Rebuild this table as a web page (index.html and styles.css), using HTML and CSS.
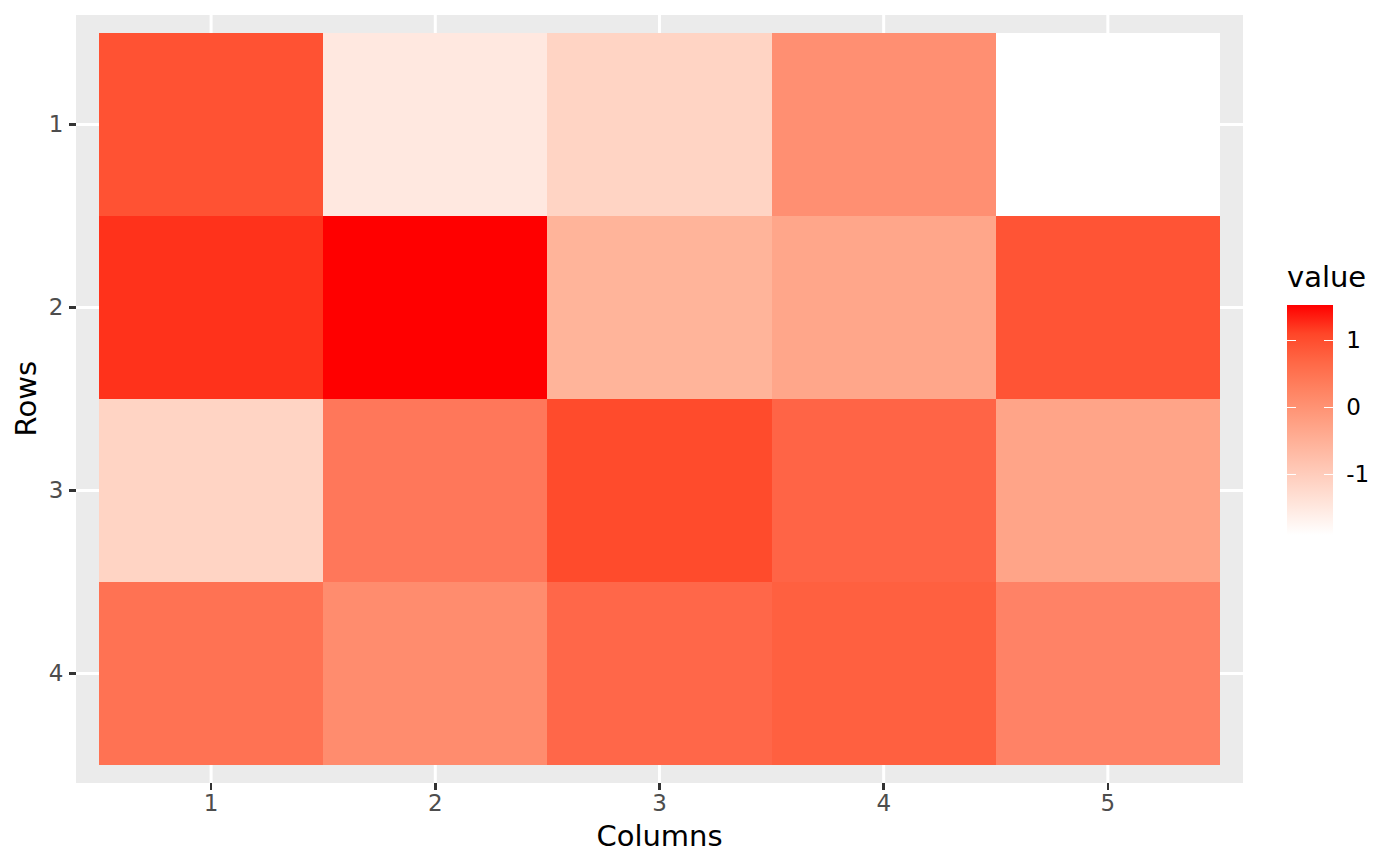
FILE: index.html
```html
<!DOCTYPE html>
<html lang="en">
<head>
<meta charset="utf-8">
<title>Heatmap</title>
<link rel="stylesheet" href="styles.css">
</head>
<body>
<div class="plot">
  <div class="left">
    <div class="ytitle">Rows</div>
    <div class="yaxis">
      <div class="yrow"><span class="ylab">1</span><span class="ytick"></span></div>
      <div class="yrow"><span class="ylab">2</span><span class="ytick"></span></div>
      <div class="yrow"><span class="ylab">3</span><span class="ytick"></span></div>
      <div class="yrow"><span class="ylab">4</span><span class="ytick"></span></div>
    </div>
  </div>

  <div class="panel">
    <div class="tiles">
      <div class="tile" style="background:#FF5233"></div>
      <div class="tile" style="background:#FFE8E0"></div>
      <div class="tile" style="background:#FFD4C4"></div>
      <div class="tile" style="background:#FF8F72"></div>
      <div class="tile" style="background:#FFFFFF"></div>

      <div class="tile" style="background:#FF321B"></div>
      <div class="tile" style="background:#FF0000"></div>
      <div class="tile" style="background:#FFB49A"></div>
      <div class="tile" style="background:#FFA68A"></div>
      <div class="tile" style="background:#FF5435"></div>

      <div class="tile" style="background:#FFD4C4"></div>
      <div class="tile" style="background:#FF775A"></div>
      <div class="tile" style="background:#FF4B2C"></div>
      <div class="tile" style="background:#FF6446"></div>
      <div class="tile" style="background:#FFA488"></div>

      <div class="tile" style="background:#FF7253"></div>
      <div class="tile" style="background:#FF8C6E"></div>
      <div class="tile" style="background:#FF6749"></div>
      <div class="tile" style="background:#FF6040"></div>
      <div class="tile" style="background:#FF8266"></div>
    </div>
  </div>

  <div class="legend">
    <div class="ltitle">value</div>
    <div class="lbody">
      <div class="bar">
        <div class="btick"></div>
        <div class="btick"></div>
        <div class="btick"></div>
      </div>
      <div class="llabels">
        <div class="llab">1</div>
        <div class="llab">0</div>
        <div class="llab">-1</div>
      </div>
    </div>
  </div>

  <div class="xaxis">
    <div class="xcell"><span class="xtick"></span><span class="xlab">1</span></div>
    <div class="xcell"><span class="xtick"></span><span class="xlab">2</span></div>
    <div class="xcell"><span class="xtick"></span><span class="xlab">3</span></div>
    <div class="xcell"><span class="xtick"></span><span class="xlab">4</span></div>
    <div class="xcell"><span class="xtick"></span><span class="xlab">5</span></div>
  </div>

  <div class="xtitle">Columns</div>
</div>
</body>
</html>
```

FILE: styles.css
```css
html, body {
  margin: 0;
  padding: 0;
  background: #ffffff;
}

body {
  width: 1400px;
  height: 866px;
  overflow: hidden;
  font-family: "DejaVu Sans", "Liberation Sans", sans-serif;
}

.plot {
  display: grid;
  grid-template-columns: 76px 1167px 1fr;
  grid-template-rows: 768px auto auto;
  padding-top: 15px;
}

/* ---------- left: y title + y axis ---------- */
.left {
  grid-column: 1;
  grid-row: 1;
  display: flex;
  align-items: center;
}

.ytitle {
  margin-left: 12px;
  writing-mode: vertical-rl;
  transform: rotate(180deg);
  font-size: 29px;
  line-height: 1;
  color: #000000;
  white-space: nowrap;
}

.yaxis {
  flex: 1;
  align-self: stretch;
  display: grid;
  grid-template-rows: repeat(4, 1fr);
  padding: 18px 0;
}

.yrow {
  display: flex;
  align-items: center;
  justify-content: flex-end;
  gap: 5.5px;
}

.ylab {
  font-size: 23px;
  line-height: 1;
  color: #4D4D4D;
}

.ytick {
  width: 7px;
  height: 2.5px;
  background: #333333;
}

/* ---------- panel ---------- */
.panel {
  grid-column: 2;
  grid-row: 1;
  background-color: #EBEBEB;
  background-image:
    linear-gradient(to right, transparent 110.85px, #ffffff 110.85px, #ffffff 113.35px, transparent 113.35px),
    linear-gradient(to bottom, transparent 90.25px, #ffffff 90.25px, #ffffff 92.75px, transparent 92.75px);
  background-size: 224.2px 100%, 100% 183px;
  background-position: 23px 0, 0 18px;
  background-repeat: repeat-x, repeat-y;
  padding: 18px 23px;
  box-sizing: border-box;
}

.tiles {
  display: grid;
  grid-template-columns: repeat(5, 1fr);
  grid-template-rows: repeat(4, 1fr);
  height: 100%;
}

.tile {
  min-width: 0;
}

/* ---------- legend ---------- */
.legend {
  grid-column: 3;
  grid-row: 1;
  align-self: center;
  padding-left: 44px;
}

.ltitle {
  font-size: 29px;
  line-height: 1;
  color: #000000;
  margin-bottom: 13px;
}

.lbody {
  display: flex;
  gap: 13.3px;
}

.bar {
  width: 46px;
  height: 230px;
  box-sizing: border-box;
  padding-top: 2.2px;
  display: grid;
  grid-auto-rows: 67px;
  align-items: center;
  background: linear-gradient(to bottom,
    #FF0000 0%,
    #FF4628 12.5%,
    #FF6846 25%,
    #FF8463 37.5%,
    #FF9E81 50%,
    #FFB7A0 62.5%,
    #FFCFBF 75%,
    #FFE7DE 87.5%,
    #FFFFFF 100%);
}

.btick {
  height: 1.2px;
  background: linear-gradient(to right,
    #ffffff 0, #ffffff 9.2px,
    transparent 9.2px, transparent 36.8px,
    #ffffff 36.8px, #ffffff 100%);
}

.llabels {
  display: grid;
  grid-auto-rows: 67px;
  align-items: center;
  padding-top: 2.2px;
  align-content: start;
}

.llab {
  font-size: 23px;
  line-height: 1;
  color: #000000;
}

/* ---------- x axis ---------- */
.xaxis {
  grid-column: 2;
  grid-row: 2;
  display: grid;
  grid-template-columns: repeat(5, 1fr);
  padding: 0 23px;
}

.xcell {
  display: flex;
  flex-direction: column;
  align-items: center;
}

.xtick {
  width: 2.5px;
  height: 7px;
  background: #333333;
}

.xlab {
  margin-top: 2.3px;
  font-size: 23px;
  line-height: 1;
  color: #4D4D4D;
}

.xtitle {
  grid-column: 2;
  grid-row: 3;
  text-align: center;
  margin-top: 6.3px;
  font-size: 29px;
  line-height: 1;
  color: #000000;
}
```
